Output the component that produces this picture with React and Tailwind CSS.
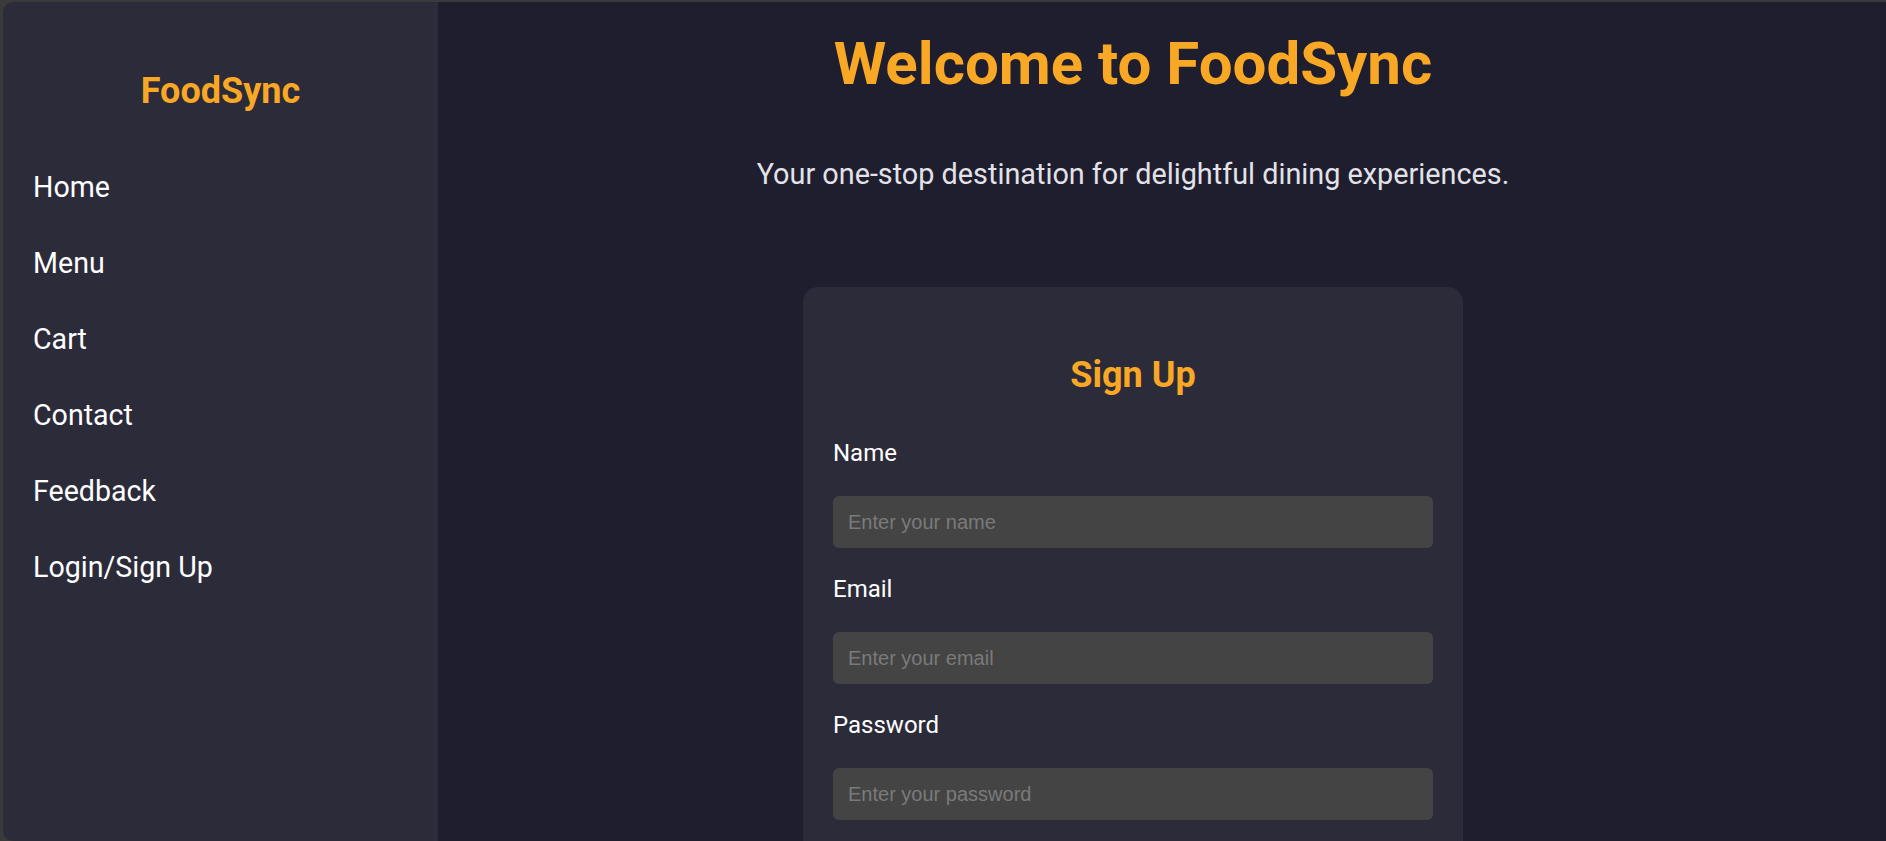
import React from "react";

const nav = ["Home", "Menu", "Cart", "Contact", "Feedback", "Login/Sign Up"];

function Field({ label, placeholder, type, first }) {
  return (
    <div className={first ? "flex flex-col" : "flex flex-col mt-[27px]"}>
      <label className="text-[24px] leading-[28px] text-white">{label}</label>
      <input
        type={type}
        placeholder={placeholder}
        className="mt-[29px] h-[52px] w-full rounded-md bg-[#444444] px-[15px] text-[20px] text-white outline-none placeholder:text-[#7a7a7a]"
        style={{ fontFamily: '"Liberation Sans", Arial, sans-serif' }}
      />
    </div>
  );
}

export default function App() {
  return (
    <div
      className="w-[1886px] h-[841px] bg-[#3a3a3a] pt-[2px] pl-[3px] overflow-hidden"
      style={{ fontFamily: 'Roboto, "Noto Sans", sans-serif' }}
    >
      <div className="flex h-[839px] rounded-l-[10px] overflow-hidden">
        <aside className="w-[435px] shrink-0 bg-[#2c2b3a] pt-[68px] pl-[30px]">
          <div className="pr-[30px] text-center text-[36px] leading-[42px] font-bold text-[#f9a826]">
            FoodSync
          </div>
          <nav className="mt-[58px] flex flex-col gap-[42px]">
            {nav.map((n) => (
              <a key={n} className="text-[28.6px] leading-[34px] text-white">
                {n}
              </a>
            ))}
          </nav>
        </aside>
        <main className="flex-1 bg-[#1f1e2e] pt-[27px] pr-[58px] flex flex-col items-center">
          <h1 className="text-[60px] leading-[70px] font-bold text-[#f9a826]">
            Welcome to FoodSync
          </h1>
          <p className="mt-[58px] text-[28.8px] leading-[34px] text-[#e2e2e8]">
            Your one-stop destination for delightful dining experiences.
          </p>
          <div className="mt-[96px] w-[660px] rounded-[15px] bg-[#2c2b3a] px-[30px] pt-[67px] pb-[40px]">
            <h2 className="text-center text-[36px] leading-[42px] font-bold text-[#f9a826]">
              Sign Up
            </h2>
            <div className="mt-[43px]">
              <Field first label="Name" placeholder="Enter your name" type="text" />
              <Field label="Email" placeholder="Enter your email" type="email" />
              <Field label="Password" placeholder="Enter your password" type="password" />
            </div>
          </div>
        </main>
      </div>
    </div>
  );
}
